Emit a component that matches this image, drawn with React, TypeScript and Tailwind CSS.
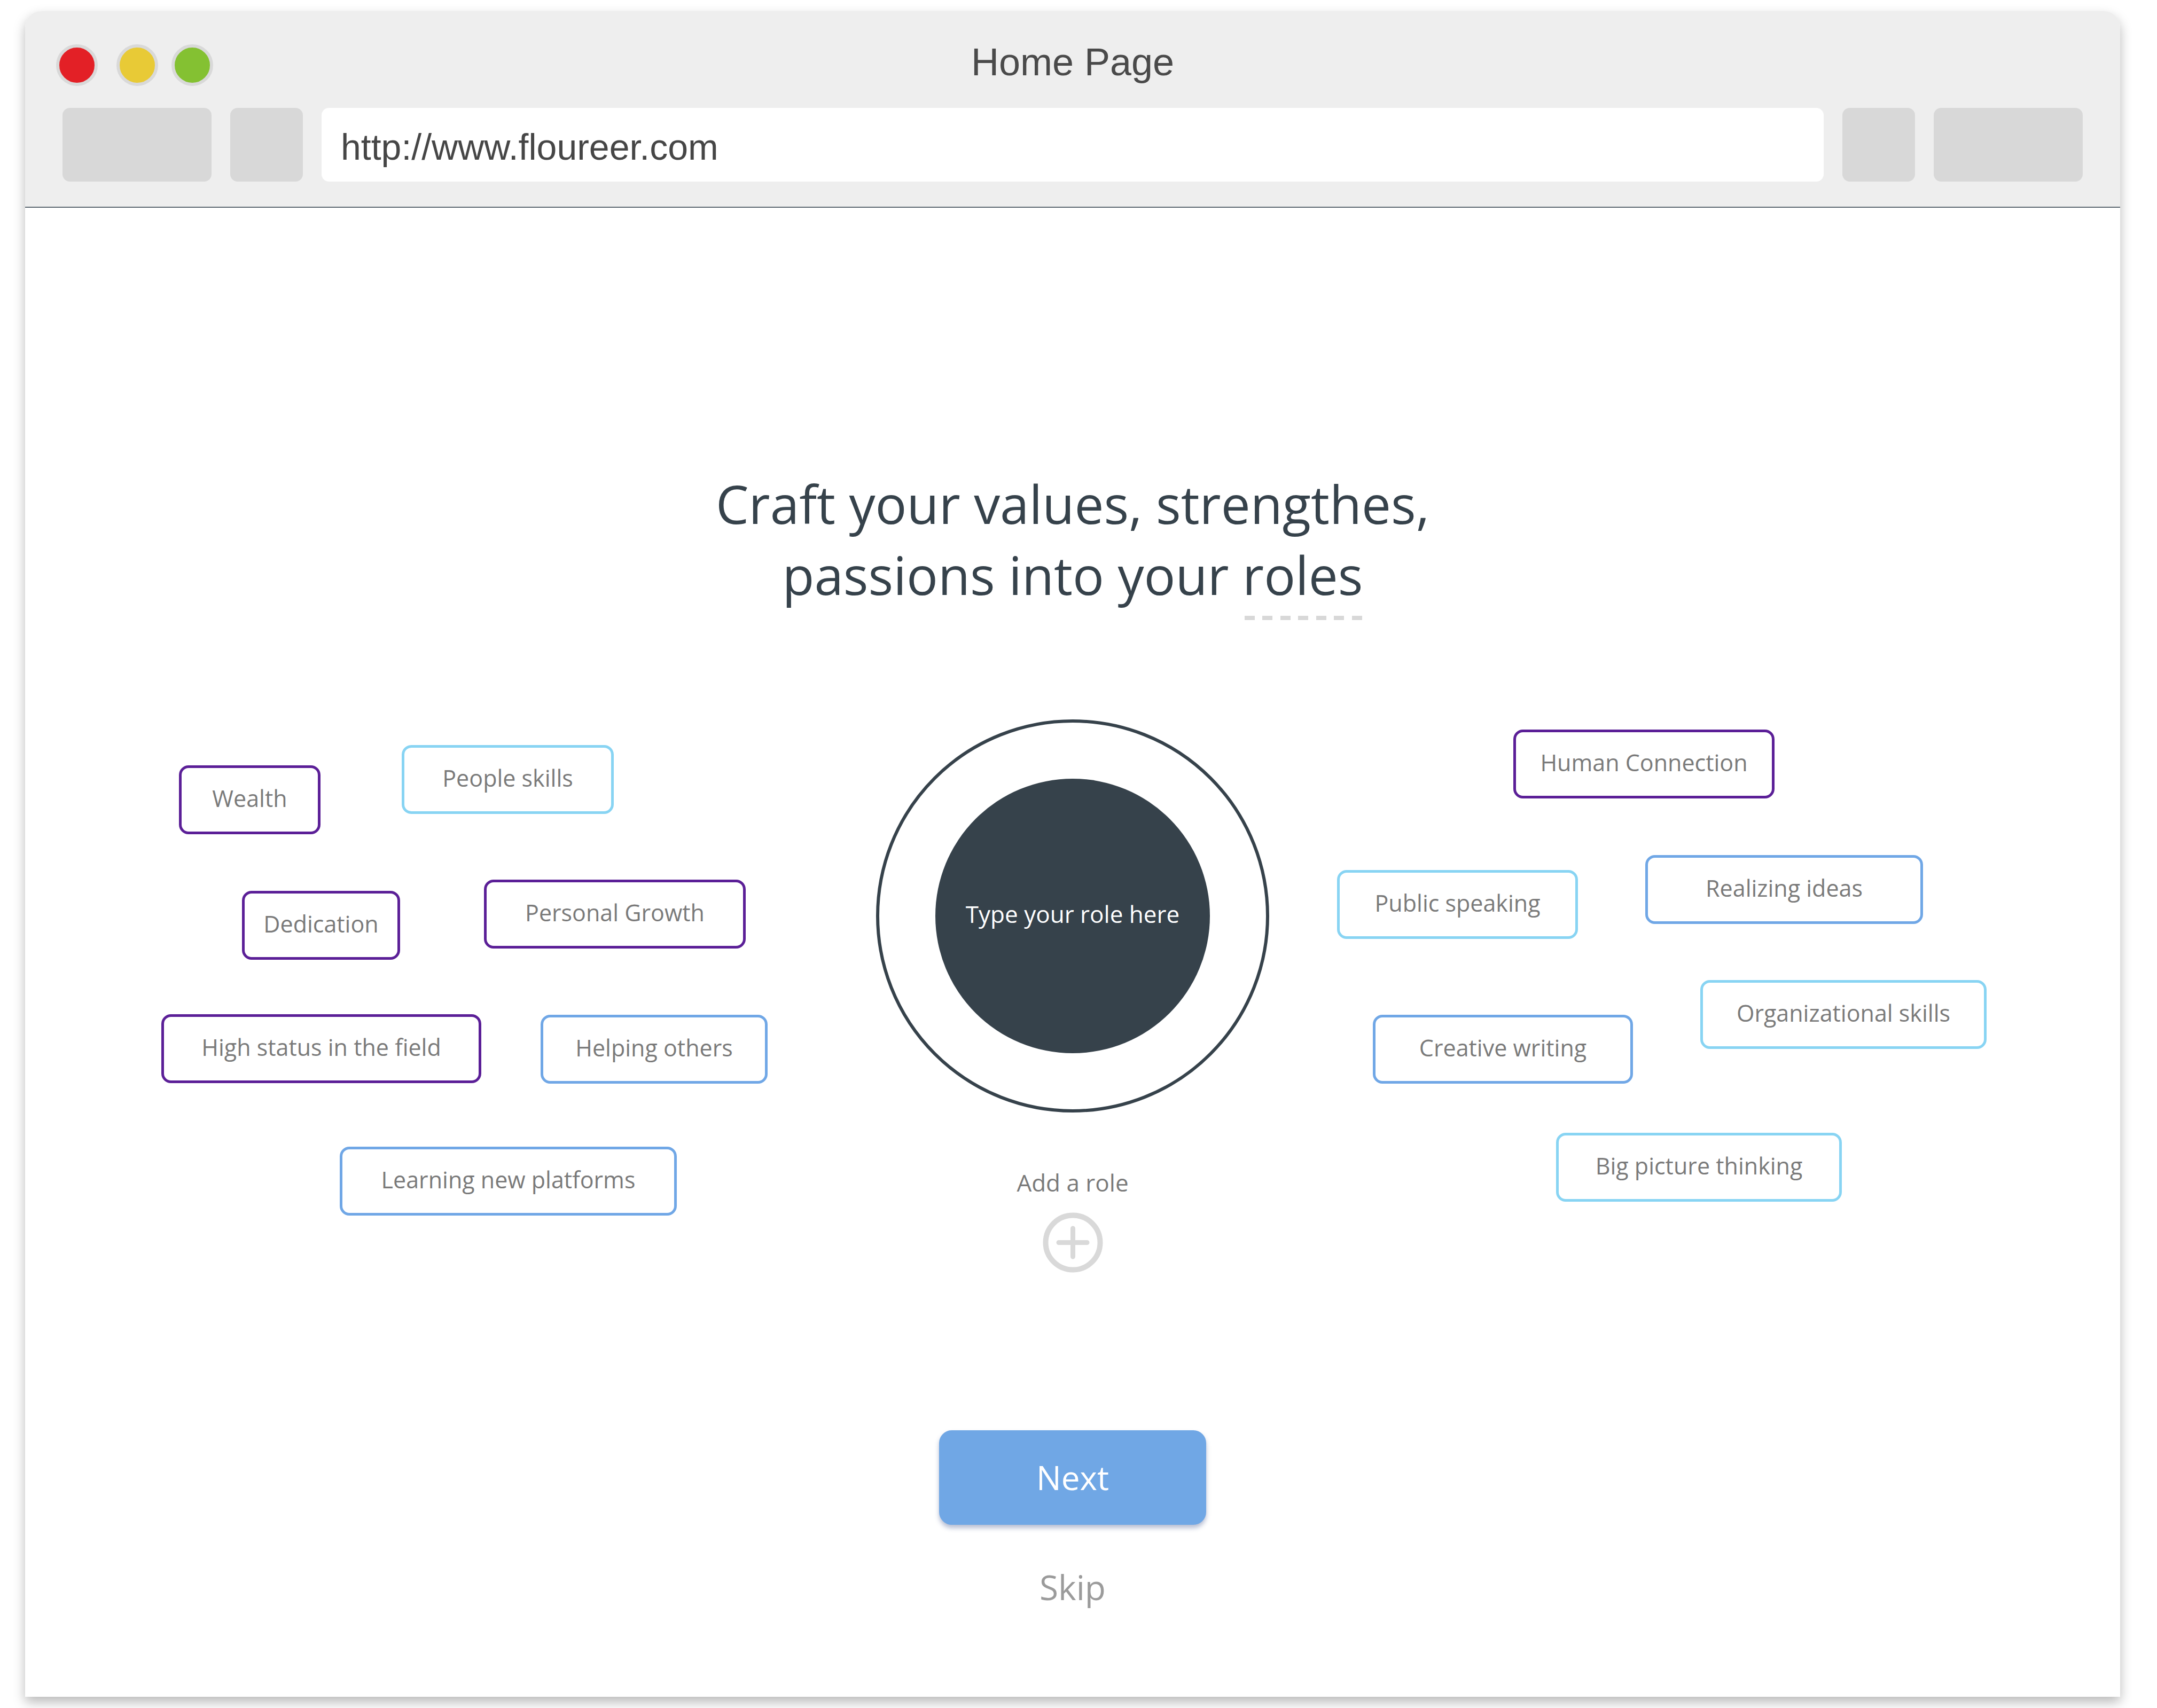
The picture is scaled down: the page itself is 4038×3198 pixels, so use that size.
import React from "react";

type Tag = {
  label: string;
  cls: string;
};

// tag colours
const PURPLE = "border-[#5b1f97]";
const SKY = "border-[#88d4f3]";
const BLUE = "border-[#70a7e6]";

const tags: Tag[] = [
  { label: "Wealth", cls: `left-[288px] top-[86px] w-[265px] ${PURPLE}` },
  { label: "People skills", cls: `left-[705px] top-[48px] w-[397px] ${SKY}` },
  { label: "Dedication", cls: `left-[406px] top-[321px] w-[296px] ${PURPLE}` },
  { label: "Personal Growth", cls: `left-[859px] top-[300px] w-[490px] ${PURPLE}` },
  { label: "High status in the field", cls: `left-[255px] top-[552px] w-[599px] ${PURPLE}` },
  { label: "Helping others", cls: `left-[965px] top-[553px] w-[425px] ${BLUE}` },
  { label: "Learning new platforms", cls: `left-[589px] top-[800px] w-[631px] ${BLUE}` },
  { label: "Human Connection", cls: `left-[2786px] top-[19px] w-[489px] ${PURPLE}` },
  { label: "Public speaking", cls: `left-[2456px] top-[282px] w-[451px] ${SKY}` },
  { label: "Realizing ideas", cls: `left-[3033px] top-[254px] w-[520px] ${BLUE}` },
  { label: "Creative writing", cls: `left-[2523px] top-[553px] w-[487px] ${BLUE}` },
  { label: "Organizational skills", cls: `left-[3136px] top-[488px] w-[536px] ${SKY}` },
  { label: "Big picture thinking", cls: `left-[2866px] top-[774px] w-[535px] ${SKY}` },
];

const TrafficLight = ({ color, extra }: { color: string; extra?: string }) => (
  <div className={`w-[78px] h-[78px] rounded-full border-[6px] border-[#d9d9d9] ${color} ${extra ?? ""}`} />
);

const TitleBar = () => {
  return (
    <div className="h-[368px] shrink-0 bg-[#eeeeee] border-b-2 border-[#5e6972] flex flex-col">
      <div className="mt-[62px] h-[78px] grid grid-cols-[1fr_auto_1fr] items-start px-[58px]">
        <div className="flex flex-row">
          <TrafficLight color="bg-[#e32026]" />
          <TrafficLight color="bg-[#e8ca36]" extra="ml-[35px]" />
          <TrafficLight color="bg-[#84c132]" extra="ml-[25px]" />
        </div>
        <p className="-mt-[3px] text-[72px] leading-[72px] text-[#4a4a4a] font-['Liberation_Sans',Arial,sans-serif]">
          Home Page
        </p>
        <div />
      </div>
      <div className="mt-[41px] h-[138px] flex flex-row gap-[35px] px-[70px]">
        <div className="w-[279px] rounded-[14px] bg-[#d8d8d8]" />
        <div className="w-[136px] rounded-[14px] bg-[#d8d8d8]" />
        <div className="flex-1 rounded-[14px] bg-white flex items-center pl-[36px] pt-[8px]">
          <span className="text-[68px] text-[#464646] font-['Liberation_Sans',Arial,sans-serif]">
            http://www.floureer.com
          </span>
        </div>
        <div className="w-[136px] rounded-[14px] bg-[#d8d8d8]" />
        <div className="w-[279px] rounded-[14px] bg-[#d8d8d8]" />
      </div>
    </div>
  );
};

const PlusCircle = () => (
  <svg width="113" height="113" viewBox="0 0 113 113" fill="none">
    <circle cx="56.5" cy="56.5" r="51" stroke="#d9d9d9" strokeWidth="10" />
    <path d="M56.5 30 V83 M30 56.5 H83" stroke="#d9d9d9" strokeWidth="9" strokeLinecap="round" />
  </svg>
);

const App = () => {
  return (
    <div className="min-h-[3198px] w-full bg-white pt-[21px] pl-[47px] font-['Open_Sans',sans-serif]">
      <div className="w-[3922px] h-[3156px] flex flex-col bg-white rounded-t-[30px] overflow-hidden shadow-[0_10px_22px_rgba(0,0,0,0.28)]">
        <TitleBar />

        <div className="flex-1 flex flex-col items-center">
          <h1 className="mt-[488px] text-center text-[98px] leading-[133px] font-normal text-[#36424b]">
            Craft your values, strengthes,
            <br />
            passions into your{" "}
            <span className="relative inline-block">
              roles
              <span className="absolute left-[4px] right-[2px] top-[143px] h-[8px] flex flex-row justify-between">
                {[0, 1, 2, 3, 4, 5, 6].map((i) => (
                  <span key={i} className="w-[19px] h-[8px] bg-[#d8d8d8]" />
                ))}
              </span>
            </span>
          </h1>

          <div className="relative w-full mt-[204px] flex flex-col items-center">
            {tags.map((t) => (
              <div
                key={t.label}
                className={`absolute h-[129px] rounded-[18px] border-[5px] bg-white flex items-center justify-center text-[43px] text-[#7a7a7a] whitespace-nowrap ${t.cls}`}
              >
                <span className="-mt-[4px]">{t.label}</span>
              </div>
            ))}

            <div className="w-[736px] h-[736px] rounded-full border-[6px] border-[#36424b] flex items-center justify-center">
              <div className="w-[514px] h-[514px] rounded-full bg-[#36424b] flex items-center justify-center">
                <span className="-mt-[8px] text-[44px] leading-none text-white">Type your role here</span>
              </div>
            </div>

            <p className="mt-[101px] text-[44px] leading-[60px] text-[#7a7a7a]">Add a role</p>
            <div className="mt-[26px]">
              <PlusCircle />
            </div>

            <button className="mt-[295px] w-[500px] h-[177px] rounded-[24px] bg-[#70a7e5] text-white text-[62px] flex items-center justify-center shadow-[0_6px_8px_rgba(50,70,130,0.35)]">
              Next
            </button>
            <p className="mt-[85px] text-[64px] leading-none text-[#9b9b9b]">Skip</p>
          </div>
        </div>
      </div>
    </div>
  );
};

export default App;
